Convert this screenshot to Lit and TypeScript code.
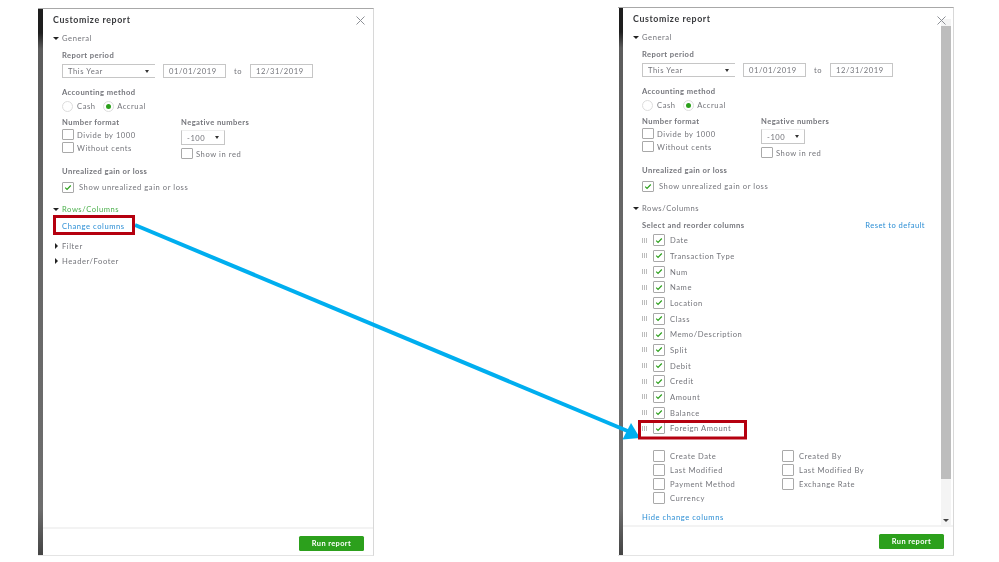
import { LitElement, html, css, nothing } from "lit";
import { customElement, property } from "lit/decorators.js";

const tick = html`<svg class="tick" viewBox="0 0 10 8"><path d="M1.5 4.2 L3.8 6.4 L8.5 1.5" fill="none" stroke="#2ca01c" stroke-width="1.5"/></svg>`;

@customElement("report-panel")
class ReportPanel extends LitElement {
  @property({ type: Boolean }) expanded = false;

  static styles = css`
    :host { display: block; }
    .panel {
      position: relative; display: flex; width: 336px; height: 548px; box-sizing: border-box;
      background: #fff; border-top: 1px solid #a8a8a8; border-right: 1px solid #d8d8d8; border-bottom: 1px solid #e4e4e4;
      font: 400 7.6px/12px Lato, "Liberation Sans", sans-serif; letter-spacing: .56px; color: #74757b;
      filter: blur(.4px);
    }
    .panel.right { height: 549px; }
    .strip { width: 5px; flex: none; background: linear-gradient(#1e1e1e 0, #1e1e1e 24px, #5c5c5c 40px, #666 200px, #6e6e6e 500px, #444 100%); }
    .right .strip { width: 4px; margin-left: 1px; }
    .main { flex: 1; min-width: 0; display: flex; flex-direction: column; }
    .scroll { flex: 1; min-height: 0; display: flex; }
    .content { flex: 1; min-width: 0; padding: 5px 0 0 10px; }
    .title { font-weight: 700; font-size: 8.8px; letter-spacing: .62px; color: #393a3d; }
    .head { display: flex; align-items: center; height: 12px; margin-top: 6px; }
    .head.gap { margin-top: 8px; }
    .head.next { margin-top: 3px; }
    .head.rc { margin-top: 10px; }
    .tri { width: 9px; flex: none; }
    .tri i { display: block; width: 0; height: 0; }
    .tri .down { border: 3.2px solid transparent; border-top: 3.5px solid #222; border-bottom: 0; }
    .tri .side { border: 3.2px solid transparent; border-left: 3.5px solid #222; border-right: 0; margin-left: 2px; }
    .green { color: #4cb04c; }
    .sec { padding-left: 9px; }
    .lab { font-weight: 700; color: #74757b; height: 12px; letter-spacing: .42px; }
    .mt5 { margin-top: 5px; }
    .mt8 { margin-top: 8px; }
    .period { display: flex; align-items: center; height: 14px; margin-top: 3px; }
    .box { box-sizing: border-box; height: 14px; border: 1px solid #c6c6c6; display: flex; align-items: center; padding: 0 5px; background: #fff; }
    .sel { width: 93px; border-right: 0; justify-content: space-between; padding-right: 6px; }
    .date { width: 63px; }
    .d1 { margin-left: 8px; }
    .to { width: 24px; text-align: center; }
    .caret { width: 0; height: 0; border: 2.5px solid transparent; border-top: 3px solid #333; border-bottom: 0; }
    .radios { display: flex; align-items: center; height: 12px; margin-top: 2px; }
    .radio { box-sizing: border-box; width: 11px; height: 11px; border-radius: 50%; border: 1px solid #ddd; display: flex; align-items: center; justify-content: center; }
    .radio b { width: 5px; height: 5px; border-radius: 50%; background: #2ca01c; }
    .radios .t { margin-left: 3.5px; }
    .radios .t.a { margin-left: 4px; margin-right: 7px; }
    .fmt { display: flex; margin-top: 4px; }
    .c1 { width: 119px; }
    .chk { display: flex; align-items: center; height: 11px; }
    .cb { box-sizing: border-box; width: 12px; height: 11px; flex: none; border: 1px solid #a9a9a9; border-radius: 1px; background: #fff; display: flex; align-items: center; justify-content: center; }
    .chk .t { margin-left: 3px; }
    .c1 .chk.first { margin-top: 1px; }
    .c1 .chk.next { margin-top: 2px; }
    .neg { box-sizing: border-box; width: 44px; height: 15px; margin-top: 2px; border: 1px solid #c6c6c6; border-top-color: #eee; display: flex; align-items: center; justify-content: space-between; padding: 0 5px; }
    .c2 .chk { margin-top: 3px; }
    .ur { margin-top: 6px; }
    .ur .chk { margin-top: 4px; height: 12px; }
    .ur .t { margin-left: 5px; }
    .link { color: #2d8fd5; }
    .change { height: 12px; margin-top: 5px; }
    .selhead { display: flex; justify-content: space-between; height: 12px; margin-top: 5px; padding-right: 16px; }
    .selhead .link { letter-spacing: .43px; }
    .rows { margin-top: 1.5px; }
    .row { display: flex; align-items: center; height: 15.67px; }
    .grip { width: 6px; height: 5px; margin-right: 5px; flex: none; background: repeating-linear-gradient(90deg, #bcbcbc 0 1px, transparent 1px 2px); }
    .row .cb, .more .cb { width: 12px; height: 12px; }
    .row .t, .more .t { margin-left: 5px; }
    .more { display: grid; grid-template-columns: 129px 1fr; grid-auto-rows: 14px; padding-left: 11px; margin-top: 12.5px; }
    .more div { display: flex; align-items: center; }
    .hide { margin-top: 6px; height: 12px; }
    .bar { width: 10px; margin-right: 2px; margin-top: 11px; flex: none; background: #f4f4f4; display: flex; flex-direction: column; align-items: center; }
    .bar .thumb { width: 100%; height: 453px; margin-top: 7px; background: #bdbdbd; }
    .bar .dn { margin-top: auto; margin-bottom: 3px; width: 0; height: 0; border: 3px solid transparent; border-top: 3px solid #444; border-bottom: 0; }
    .x { position: absolute; top: 7px; right: 8px; width: 9px; height: 9px; }
    .right .x { top: 8px; right: 7px; }
    .footer { flex: none; height: 28px; box-sizing: border-box; border-top: 2px solid #f3f3f3; padding: 7px 9px 0 0; display: flex; justify-content: flex-end; align-items: flex-start; background: #fff; }
    .right .footer { height: 30px; }
    .run { box-sizing: border-box; width: 65px; height: 15px; border-radius: 1.5px; background: #2ca01c; color: #fff; font-weight: 700; font-size: 7.4px; letter-spacing: .4px; display: flex; align-items: center; justify-content: center; }
    .tick { width: 8px; height: 7px; }
  `;

  private check(label: string, checked = false, cls = "") {
    return html`<div class="chk ${cls}"><span class="cb">${checked ? tick : nothing}</span><span class="t">${label}</span></div>`;
  }

  render() {
    const cols = ["Date", "Transaction Type", "Num", "Name", "Location", "Class", "Memo/Description", "Split", "Debit", "Credit", "Amount", "Balance", "Foreign Amount"];
    const more = ["Create Date", "Created By", "Last Modified", "Last Modified By", "Payment Method", "Exchange Rate", "Currency"];
    return html`<div class="panel ${this.expanded ? "right" : ""}">
      <div class="strip"></div>
      <div class="main">
        <div class="scroll">
          <div class="content">
            <div class="title">Customize report</div>
            <div class="head"><span class="tri"><i class="down"></i></span><span>General</span></div>
            <div class="sec">
              <div class="lab mt5">Report period</div>
              <div class="period">
                <div class="box sel"><span>This Year</span><i class="caret"></i></div>
                <div class="box date d1">01/01/2019</div>
                <div class="to">to</div>
                <div class="box date">12/31/2019</div>
              </div>
              <div class="lab mt8">Accounting method</div>
              <div class="radios">
                <span class="radio"></span><span class="t a">Cash</span>
                <span class="radio"><b></b></span><span class="t">Accrual</span>
              </div>
              <div class="fmt">
                <div class="c1">
                  <div class="lab">Number format</div>
                  ${this.check("Divide by 1000", false, "first")}
                  ${this.check("Without cents", false, "next")}
                </div>
                <div class="c2">
                  <div class="lab">Negative numbers</div>
                  <div class="neg"><span>-100</span><i class="caret"></i></div>
                  ${this.check("Show in red")}
                </div>
              </div>
              <div class="ur">
                <div class="lab">Unrealized gain or loss</div>
                ${this.check("Show unrealized gain or loss", true)}
              </div>
            </div>
            <div class="head rc"><span class="tri"><i class="down"></i></span><span class="${this.expanded ? "" : "green"}">Rows/Columns</span></div>
            ${this.expanded
              ? html`<div class="sec">
                  <div class="selhead"><span class="lab">Select and reorder columns</span><span class="link">Reset to default</span></div>
                  <div class="rows">
                    ${cols.map((c) => html`<div class="row"><i class="grip"></i><span class="cb">${tick}</span><span class="t">${c}</span></div>`)}
                  </div>
                  <div class="more">
                    ${more.map((c) => html`<div><span class="cb"></span><span class="t">${c}</span></div>`)}
                  </div>
                  <div class="hide link">Hide change columns</div>
                </div>`
              : html`<div class="sec"><div class="change link">Change columns</div></div>
                  <div class="head gap"><span class="tri"><i class="side"></i></span><span>Filter</span></div>
                  <div class="head next"><span class="tri"><i class="side"></i></span><span>Header/Footer</span></div>`}
          </div>
          ${this.expanded ? html`<div class="bar"><div class="thumb"></div><i class="dn"></i></div>` : nothing}
        </div>
        <div class="footer"><div class="run">Run report</div></div>
      </div>
      <svg class="x" viewBox="0 0 9 9"><path d="M.5 .5 L8.5 8.5 M8.5 .5 L.5 8.5" stroke="#8d9096" stroke-width="1" fill="none"/></svg>
    </div>`;
  }
}

@customElement("app-root")
export class AppRoot extends LitElement {
  static styles = css`
    :host { display: block; position: relative; width: 999px; height: 562px; overflow: hidden; background: #fff; }
    .stage { display: flex; align-items: flex-start; padding-left: 38px; gap: 244px; }
    .left { margin-top: 8px; }
    .rightp { margin-top: 7px; }
    .over { position: absolute; inset: 0; width: 999px; height: 562px; pointer-events: none; filter: blur(.3px); }
  `;
  render() {
    return html`<div class="stage">
        <report-panel class="left"></report-panel>
        <report-panel class="rightp" expanded></report-panel>
      </div>
      <svg class="over" viewBox="0 0 999 562">
        <path d="M135 225 L630 432" stroke="#00aeef" stroke-width="4" fill="none"/>
        <path d="M640 438 L622.5 439.5 L631 423 Z" fill="#00aeef"/>
        <rect x="54.5" y="216.5" width="79" height="17" fill="none" stroke="#b5000f" stroke-width="3"/>
        <rect x="639.5" y="421.5" width="106" height="16.5" fill="none" stroke="#b5000f" stroke-width="3"/>
      </svg>`;
  }
}
